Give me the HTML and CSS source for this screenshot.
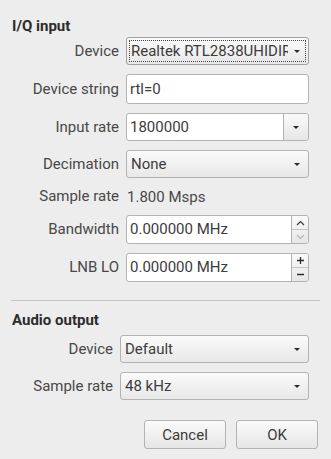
FILE: index.html
```html
<!DOCTYPE html>
<html lang="en">
<head>
  <meta charset="UTF-8" />
  <meta name="viewport" content="width=device-width, initial-scale=1.0">
  <title>Input/Output Settings</title>
  <link rel="stylesheet" href="styles.css">
</head>
<body>
  <div class="dialog">
    <h2>I/Q input</h2>
    <div class="form iq-form">
      <label>Device</label>
      <div class="combo focused">
        <span class="combo-text">Realtek RTL2838UHIDIR</span>
        <span class="arrow"></span>
      </div>

      <label>Device string</label>
      <div class="line-edit">rtl=0</div>

      <label>Input rate</label>
      <div class="edit-combo">
        <span class="edit-text">1800000</span>
        <span class="drop-btn"><span class="arrow"></span></span>
      </div>

      <label>Decimation</label>
      <div class="combo">
        <span class="combo-text">None</span>
        <span class="arrow"></span>
      </div>

      <label>Sample rate</label>
      <div class="value-text">1.800 Msps</div>

      <label>Bandwidth</label>
      <div class="spin">
        <span class="edit-text">0.000000 MHz</span>
        <span class="spin-btns">
          <span class="spin-up">
            <svg width="9" height="6" viewBox="0 0 9 6"><polyline points="1,5 4.5,1.5 8,5" fill="none" stroke="#3a3a3a" stroke-width="1.2"/></svg>
          </span>
          <span class="spin-down">
            <svg width="9" height="6" viewBox="0 0 9 6"><polyline points="1,1 4.5,4.5 8,1" fill="none" stroke="#b4b4b4" stroke-width="1.2"/></svg>
          </span>
        </span>
      </div>

      <label>LNB LO</label>
      <div class="spin">
        <span class="edit-text">0.000000 MHz</span>
        <span class="spin-btns">
          <span class="spin-up">
            <svg width="9" height="9" viewBox="0 0 9 9"><path d="M1 4.5H8M4.5 1V8" stroke="#2e2e2e" stroke-width="1.3"/></svg>
          </span>
          <span class="spin-down">
            <svg width="9" height="9" viewBox="0 0 9 9"><path d="M1 4.5H8" stroke="#2e2e2e" stroke-width="1.3"/></svg>
          </span>
        </span>
      </div>
    </div>

    <hr class="separator">

    <h2>Audio output</h2>
    <div class="form audio-form">
      <label>Device</label>
      <div class="combo">
        <span class="combo-text">Default</span>
        <span class="arrow"></span>
      </div>

      <label>Sample rate</label>
      <div class="combo">
        <span class="combo-text">48 kHz</span>
        <span class="arrow"></span>
      </div>
    </div>

    <div class="buttons">
      <button class="btn">Cancel</button>
      <button class="btn">OK</button>
    </div>
  </div>
</body>
</html>
```

FILE: styles.css
```css
body {
  margin: 0;
  background-color: #ededed;
  font-family: Roboto, "Noto Sans", sans-serif;
  font-size: 15px;
  color: #484848;
}
.dialog {
  width: 331px;
  box-sizing: border-box;
  padding: 17px 13px 12px 12px;
}
h2 {
  margin: 0;
  font-size: 15px;
  font-weight: bold;
  line-height: 18px;
  color: #2c2c2c;
}
.form {
  display: grid;
  column-gap: 7px;
  row-gap: 9px;
  align-items: center;
  margin-top: 2px;
}
.iq-form {
  grid-template-columns: 107px 183px;
}
.audio-form {
  grid-template-columns: 101px 189px;
  margin-top: 6px;
}
.form label {
  text-align: right;
  white-space: nowrap;
  line-height: 17px;
}
.combo, .edit-combo, .spin {
  height: 28px;
  box-sizing: border-box;
  display: flex;
  align-items: stretch;
  border: 1px solid #b3b3b3;
  border-radius: 3px;
  overflow: hidden;
  color: #3c3c3c;
}
.combo {
  background: linear-gradient(#fafafa, #e8e8e8);
  padding: 0 8px 0 4px;
  align-items: center;
}
.combo-text {
  flex-grow: 1;
  white-space: nowrap;
  overflow: hidden;
  line-height: 18px;
}
.combo.focused {
  position: relative;
  border-color: #a0a0a0;
}
.combo.focused::after {
  content: "";
  position: absolute;
  left: 2px;
  top: 2px;
  right: 2px;
  bottom: 2px;
  border: 1px dotted #404040;
  border-radius: 1px;
}
.arrow {
  width: 0;
  height: 0;
  border-left: 3px solid transparent;
  border-right: 3px solid transparent;
  border-top: 3px solid #2a2a2a;
  margin-left: 6px;
  flex-shrink: 0;
}
.line-edit {
  height: 30px;
  box-sizing: border-box;
  background: white;
  border: 1px solid #b3b3b3;
  border-radius: 3px;
  padding: 0 3px;
  line-height: 28px;
  color: #3c3c3c;
}
.edit-combo, .spin {
  background: white;
}
.edit-text {
  flex-grow: 1;
  padding: 0 3px;
  line-height: 26px;
  white-space: nowrap;
}
.drop-btn {
  width: 24px;
  display: flex;
  align-items: center;
  justify-content: center;
  border-left: 1px solid #b3b3b3;
  background: linear-gradient(#fafafa, #e6e6e6);
}
.drop-btn .arrow {
  margin-left: 0;
}
.value-text {
  line-height: 17px;
  padding-left: 1px;
  margin-top: 2px;
}
.spin {
  height: 29px;
}
.spin-btns {
  width: 16px;
  display: flex;
  flex-direction: column;
  border-left: 1px solid #b3b3b3;
  background: linear-gradient(#fafafa, #e6e6e6);
}
.spin-up, .spin-down {
  flex: 1;
  display: flex;
  align-items: center;
  justify-content: center;
}
.spin-up {
  border-bottom: 1px solid #c4c4c4;
}
.separator {
  margin: 18px 0 10px -1px;
  width: 309px;
  border: none;
  border-top: 1px solid #c6c6c6;
  height: 0;
}
.buttons {
  display: flex;
  justify-content: flex-end;
  gap: 10px;
  margin-top: 20px;
}
.btn {
  width: 82px;
  height: 29px;
  font-family: Roboto, "Noto Sans", sans-serif;
  font-size: 15px;
  color: #3c3c3c;
  background: linear-gradient(#fafafa, #e6e6e6);
  border: 1px solid #b3b3b3;
  border-radius: 3px;
  padding: 0;
}
```
